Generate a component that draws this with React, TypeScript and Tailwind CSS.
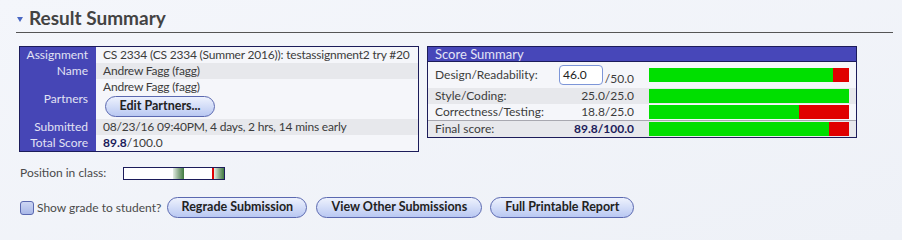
import React from "react";

const font = { fontFamily: "Lato, 'Open Sans', sans-serif" };

function PillButton({ label, className = "" }: { label: string; className?: string }) {
  return (
    <button
      className={`h-[21px] whitespace-nowrap rounded-full border border-[#5a68b0] bg-gradient-to-b from-[#eef2fd] to-[#b9c8f2] px-0 text-[12.5px] font-bold leading-none text-[#222] ${className}`}
    >
      {label}
    </button>
  );
}

function ScoreBar({ pct }: { pct: number }) {
  return (
    <div className="flex h-[14px] w-[200px] bg-[#e00000]">
      <div className="h-full bg-[#00df00]" style={{ width: `${pct * 100}%` }} />
    </div>
  );
}

export default function App() {
  const leftRows = [
    { label: "Assignment", value: "CS 2334 (CS 2334 (Summer 2016)): testassignment2 try #20", bg: "bg-[#f5f6fa]" },
    { label: "Name", value: "Andrew Fagg (fagg)", bg: "bg-[#e7e8ec]" },
  ];

  return (
    <div className="min-h-[240px] w-[902px] bg-gradient-to-br from-[#f4f6fb] to-[#eef1f7] pl-[16px] pr-[9px] pt-[6px]" style={font}>
      {/* Heading */}
      <div className="flex h-[27px] items-center border-b border-[#555] pb-[1px]">
        <span className="ml-[1px] mr-[6px] mt-[2px] h-0 w-0 border-x-[3.5px] border-t-[5px] border-x-transparent border-t-[#4a68c4]" />
        <h1 className="text-[19px] font-bold text-[#434343]">Result Summary</h1>
      </div>

      <div className="ml-[3px] mt-[13px] flex items-start gap-[8px]">
        {/* Submission info */}
        <div className="w-[400px] border border-[#1c1c5a] text-[12px] leading-[16px]">
          {leftRows.map((r) => (
            <div key={r.label} className="flex h-[16px]">
              <div className="w-[76px] bg-[#4646b6] pr-[8px] text-right text-[#e2e2f4]">{r.label}</div>
              <div className={`flex-1 whitespace-nowrap pl-[7px] tracking-[-0.2px] text-[#3c3c3c] ${r.bg}`}>{r.value}</div>
            </div>
          ))}
          <div className="flex h-[40px]">
            <div className="flex w-[76px] items-center justify-end bg-[#4646b6] pr-[8px] text-[#e2e2f4]">Partners</div>
            <div className="flex-1 bg-[#f5f6fa] pl-[7px] text-[#3c3c3c]">
              <div className="tracking-[-0.2px]">Andrew Fagg (fagg)</div>
              <PillButton label="Edit Partners..." className="ml-[2px] mt-[1px] h-[20px] w-[110px]" />
            </div>
          </div>
          <div className="flex h-[16px]">
            <div className="w-[76px] bg-[#4646b6] pr-[8px] text-right text-[#e2e2f4]">Submitted</div>
            <div className="flex-1 whitespace-nowrap bg-[#e7e8ec] pl-[7px] tracking-[-0.2px] text-[#3c3c3c]">
              08/23/16 09:40PM, 4 days, 2 hrs, 14 mins early
            </div>
          </div>
          <div className="flex h-[16px]">
            <div className="w-[76px] whitespace-nowrap bg-[#4646b6] pr-[8px] text-right text-[#e2e2f4]">Total Score</div>
            <div className="flex-1 bg-[#f5f6fa] pl-[7px] text-[#3c3c3c]">
              <span className="font-bold text-[#1c1c5a]">89.8</span>/100.0
            </div>
          </div>
        </div>

        {/* Score summary */}
        <div className="w-[430px] border border-[#1c1c5a] text-[12px] leading-[16px] text-[#3c3c3c]">
          <div className="h-[15px] border-b border-[#1c1c5a] bg-[#4747b9] pl-[7px] text-[13px] leading-[14px] text-[#e4e4f6]">
            Score Summary
          </div>
          <div className="flex h-[26px] items-center bg-[#f5f6fa] px-[7px]">
            <div className="w-[124px]">Design/Readability:</div>
            <div className="flex w-[75px] items-end">
              <div className="h-[20px] w-[49px] rounded-[4px] border border-[#7d96d8] bg-white pl-[3px] text-[12px] leading-[18px] text-[#222]">
                46.0
              </div>
              <span className="ml-[2px] translate-y-[2px]">/50.0</span>
            </div>
            <div className="ml-[15px]">
              <ScoreBar pct={0.92} />
            </div>
          </div>
          <div className="flex h-[16px] items-center bg-[#e7e8ec] px-[7px]">
            <div className="w-[124px]">Style/Coding:</div>
            <div className="w-[75px] text-right">25.0/25.0</div>
            <div className="ml-[15px]">
              <ScoreBar pct={1} />
            </div>
          </div>
          <div className="flex h-[16px] items-center bg-[#f5f6fa] px-[7px]">
            <div className="w-[124px]">Correctness/Testing:</div>
            <div className="w-[75px] text-right">18.8/25.0</div>
            <div className="ml-[15px]">
              <ScoreBar pct={0.752} />
            </div>
          </div>
          <div className="flex h-[17px] items-center border-t border-[#a8a8b0] bg-[#e7e8ec] px-[7px]">
            <div className="w-[124px]">Final score:</div>
            <div className="w-[75px] text-right font-bold text-[#1c1c5a]">89.8/100.0</div>
            <div className="ml-[15px]">
              <ScoreBar pct={0.898} />
            </div>
          </div>
        </div>
      </div>

      {/* Position in class */}
      <div className="ml-[4px] mt-[12px] flex items-center text-[12px] text-[#4a4a4a]">
        <span className="w-[103px]">Position in class:</span>
        <div className="relative h-[13px] w-[102px] border border-[#1c1c5a] bg-white">
          <div className="absolute left-[49px] top-0 h-full w-[11px] bg-gradient-to-r from-[#e4ece4] via-[#8fae8f] to-[#3f7a3f]" />
          <div className="absolute left-[90px] top-0 h-full w-[10px] bg-gradient-to-r from-[#e4ece4] via-[#8fae8f] to-[#3f7a3f]" />
          <div className="absolute left-[88px] top-0 h-full w-[2px] bg-[#e00000]" />
        </div>
      </div>

      {/* Actions */}
      <div className="ml-[4px] mt-[15px] flex items-center">
        <span className="h-[14px] w-[14px] rounded-[3px] border border-[#5a68b0] bg-gradient-to-b from-[#cdd6f3] to-[#a9b8e8]" />
        <span className="ml-[3px] text-[12px] text-[#4a4a4a]">Show grade to student?</span>
        <PillButton label="Regrade Submission" className="ml-[6px] w-[140px]" />
        <PillButton label="View Other Submissions" className="ml-[9px] w-[166px]" />
        <PillButton label="Full Printable Report" className="ml-[8px] w-[144px]" />
      </div>
    </div>
  );
}
